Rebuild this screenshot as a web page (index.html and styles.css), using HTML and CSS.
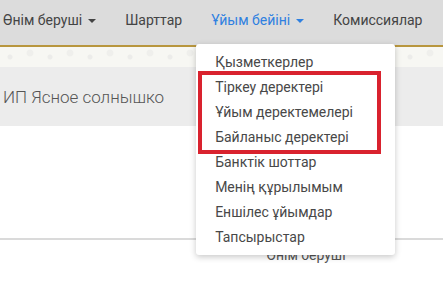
FILE: index.html
```html
<!DOCTYPE html>
<html lang="kk">
<head>
    <meta charset="UTF-8">
    <meta name="viewport" content="width=device-width, initial-scale=1.0">
    <title>Ұйым бейіні</title>
    <link rel="stylesheet" href="styles.css">
</head>
<body>
    <nav class="navbar">
        <a class="nav-link" href="#">Өнім беруші <span class="caret"></span></a>
        <a class="nav-link" href="#">Шарттар</a>
        <div class="nav-dropdown">
            <a class="nav-link active" href="#">Ұйым бейіні <span class="caret"></span></a>
            <ul class="dropdown-menu">
                <li><a href="#">Қызметкерлер</a></li>
                <li class="marked-group">
                    <a href="#">Тіркеу деректері</a>
                    <a href="#">Ұйым деректемелері</a>
                    <a href="#">Байланыс деректері</a>
                </li>
                <li><a href="#">Банктік шоттар</a></li>
                <li><a href="#">Менің құрылымым</a></li>
                <li><a href="#">Еншілес ұйымдар</a></li>
                <li><a href="#">Тапсырыстар</a></li>
            </ul>
        </div>
        <a class="nav-link" href="#">Комиссиялар</a>
    </nav>
    <div class="ornament"></div>
    <div class="org-header">
        <h1>ИП Ясное солнышко</h1>
    </div>
    <div class="content"></div>
    <div class="footer">
        <span>Өнім беруші</span>
    </div>
</body>
</html>
```

FILE: styles.css
```css
body {
    margin: 0;
    font-family: Roboto, "Noto Sans", sans-serif;
    background-color: #fff;
    color: #333;
    overflow: hidden;
}
a {
    text-decoration: none;
}
.navbar {
    display: flex;
    align-items: flex-start;
    height: 45px;
    background-color: #dcdcdc;
    border-bottom: 2px solid #b8963e;
    padding-left: 3px;
    white-space: nowrap;
}
.nav-link {
    display: flex;
    align-items: center;
    flex-shrink: 0;
    font-size: 14px;
    color: #444;
    margin-right: 29px;
    height: 40px;
}
.nav-link.active {
    color: #2f80e0;
}
.caret {
    display: inline-block;
    width: 0;
    height: 0;
    margin-left: 6px;
    margin-top: 2px;
    border-top: 4px solid currentColor;
    border-left: 4px solid transparent;
    border-right: 4px solid transparent;
}
.nav-dropdown {
    position: relative;
    flex-shrink: 0;
}
.dropdown-menu {
    position: absolute;
    top: 44px;
    left: -15px;
    z-index: 10;
    width: 199px;
    margin: 0;
    padding: 6px 0 5px;
    list-style: none;
    background-color: #fff;
    border-radius: 3px;
    box-shadow: 0 2px 6px rgba(0, 0, 0, 0.22);
}
.dropdown-menu a {
    display: block;
    padding: 0 0 0 19px;
    line-height: 25px;
    font-size: 14px;
    color: #484848;
}
/* annotation frame drawn over three items */
.marked-group {
    margin: 0 18px 0 6px;
    outline: 4px solid #d9222e;
}
.marked-group a {
    padding-left: 13px;
}
.ornament {
    height: 20px;
    background-color: #f7f7f3;
    background-image:
        radial-gradient(circle at 10px 10px, #ececea 2px, transparent 3px),
        radial-gradient(circle at 30px 6px, #efefec 3px, transparent 4px);
    background-size: 40px 20px;
}
.org-header {
    height: 59px;
    background-color: #ececec;
    display: flex;
    align-items: center;
    padding-left: 3px;
}
.org-header h1 {
    margin: 0;
    font-size: 17px;
    font-weight: 300;
    color: #555;
}
.content {
    height: 112px;
    border-bottom: 2px solid #dadada;
}
.footer {
    text-align: center;
    padding-left: 169px;
    padding-top: 7px;
    font-size: 14px;
    color: #555;
}
```
